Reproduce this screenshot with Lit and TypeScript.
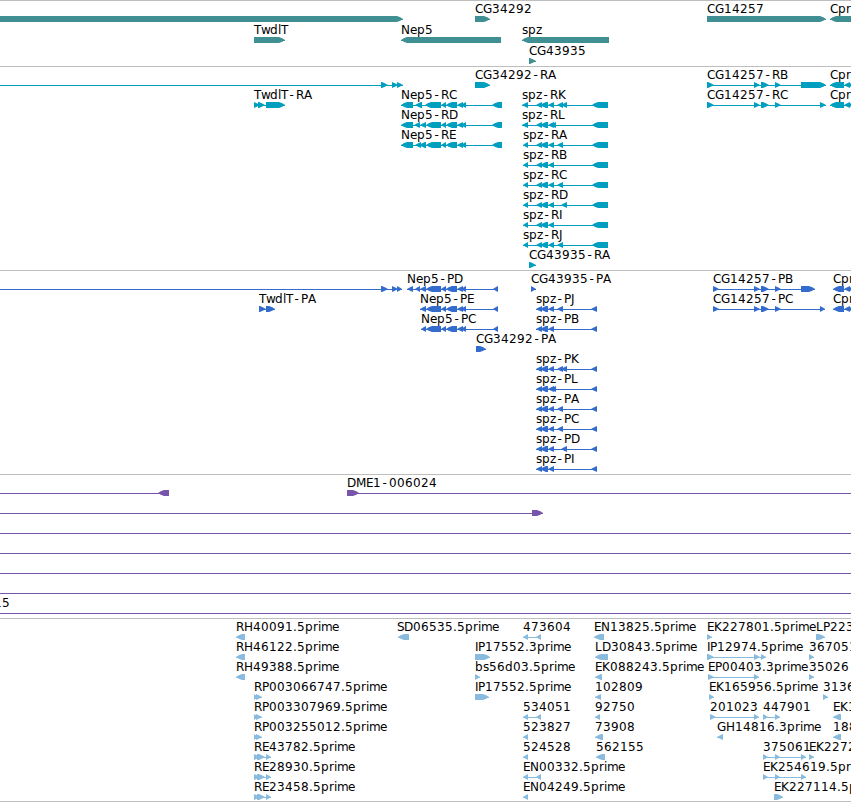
import { LitElement, html, svg, css } from 'lit';
import { customElement, property } from 'lit/decorators.js';

type Strand = '+' | '-';
type Span = [number, number];

interface Feature {
  row: number;
  label: string;
  x: number;
  strand: Strand;
  spans: Span[];
  line?: Span;
}

interface Track {
  name: string;
  height: number;
  pitch: number;
  features: Feature[];
}

const EDGE = 860;

const ADVANCES: Record<string, number> = {
  A: 8, B: 7, C: 8, D: 9, E: 7, G: 9, H: 9, I: 3, J: 4, K: 8, L: 7, M: 10, N: 9,
  P: 7, R: 8, S: 7, T: 7, b: 8, d: 8, e: 7, i: 3, l: 3, m: 11, p: 8, r: 5, s: 6,
  w: 9, z: 6, '.': 4,
};

function feature(row: number, label: string, x: number, strand: Strand, spans: Span[], line?: Span): Feature {
  return { row, label, x, strand, spans, line };
}

// exon blocks shared between isoforms
const nep5Tail: Span[] = [[426, 441], [441, 446], [446, 457], [457, 463], [461, 466]];
const spzCore: Span[] = [[536, 542], [540, 548], [548, 554]];
const cg14257Mid: Span[] = [[754, 760], [761, 769], [775, 781]];

const spzExtra: Record<string, Span[]> = {
  K: [[557, 563], [561, 567]],
  L: [[550, 556]],
  A: [[557, 563]],
  B: [],
  C: [[557, 563]],
  D: [[561, 567]],
  I: [],
  J: [[557, 563]],
};

const spzRna = ['K', 'L', 'A', 'B', 'C', 'D', 'I', 'J'].map((id, i) => {
  const start = i < 2 ? 522 : 523;
  return feature(i + 1, `spz-R${id}`, start, '-', [[start, 528], ...spzCore, ...spzExtra[id], [592, 608]]);
});

const spzCds = ([['J', 1], ['B', 2], ['K', 4], ['L', 5], ['A', 6], ['C', 7], ['D', 8], ['I', 9]] as [string, number][]).map(
  ([id, row]) => feature(row, `spz-P${id}`, 536, '-', [...spzCore, ...spzExtra[id], [591, 597]])
);

const twoExons: Span[] = [[523, 528], [536, 541]];
const rpExons: Span[] = [[254, 258], [256, 262]];
const reExons: Span[] = [[254, 260], [257, 265], [266, 271]];

const tracks: Track[] = [
  {
    name: 'gene',
    height: 65,
    pitch: 21,
    features: [
      feature(0, '', 0, '+', [[-10, 403]]),
      feature(0, 'CG34292', 475, '+', [[475, 490]]),
      feature(0, 'CG14257', 707, '+', [[707, 826]]),
      feature(0, 'Cpr', 830, '-', [[830, EDGE]]),
      feature(1, 'TwdlT', 254, '+', [[254, 285]]),
      feature(1, 'Nep5', 401, '-', [[401, 501]]),
      feature(1, 'spz', 522, '-', [[522, 609]]),
      feature(2, 'CG43935', 529, '+', [[529, 536]]),
    ],
  },
  {
    name: 'rna',
    height: 203,
    pitch: 20,
    features: [
      feature(0, '', 0, '+', [[381, 388], [392, 398], [397, 403]], [0, 403]),
      feature(0, 'CG34292-RA', 475, '+', [[475, 490]]),
      feature(0, 'CG14257-RB', 707, '+', [[707, 714], ...cg14257Mid, [801, 826]]),
      feature(0, 'Cpr', 830, '-', [[830, 844], [844, 850], [848, EDGE]]),
      feature(1, 'TwdlT-RA', 254, '+', [[254, 260], [258, 265], [266, 285]]),
      feature(1, 'Nep5-RC', 401, '-', [[401, 413], [415, 422], [425, 441], ...nep5Tail.slice(1), [492, 502]]),
      feature(1, 'CG14257-RC', 707, '+', [[707, 714], ...cg14257Mid, [820, 826]]),
      feature(1, 'Cpr', 830, '-', [[830, 844], [844, 850], [848, EDGE]]),
      feature(2, 'Nep5-RD', 401, '-', [[401, 413], [414, 420], [420, 426], ...nep5Tail, [492, 502]]),
      feature(3, 'Nep5-RE', 401, '-', [[401, 413], [415, 421], [419, 426], ...nep5Tail, [492, 502]]),
      ...spzRna,
      feature(9, 'CG43935-RA', 529, '+', [[529, 536]]),
    ],
  },
  {
    name: 'cds',
    height: 203,
    pitch: 20,
    features: [
      feature(0, '', 0, '+', [[381, 388], [392, 398], [397, 402]], [0, 402]),
      feature(0, 'Nep5-PD', 407, '-', [[407, 413], [415, 420], [420, 426], ...nep5Tail, [493, 498]]),
      feature(0, 'CG43935-PA', 531, '+', [[531, 536]]),
      feature(0, 'CG14257-PB', 713, '+', [[713, 719], ...cg14257Mid, [801, 815]]),
      feature(0, 'Cpr', 833, '-', [[833, 844], [844, 850], [848, EDGE]]),
      feature(1, 'TwdlT-PA', 259, '+', [[259, 266], [266, 275]]),
      feature(1, 'Nep5-PE', 420, '-', [[420, 426], ...nep5Tail, [493, 498]]),
      feature(1, 'CG14257-PC', 713, '+', [[713, 719], ...cg14257Mid, [820, 825]]),
      feature(1, 'Cpr', 833, '-', [[833, 844], [844, 850], [848, EDGE]]),
      feature(2, 'Nep5-PC', 421, '-', [[421, 426], ...nep5Tail, [493, 498]]),
      feature(3, 'CG34292-PA', 476, '+', [[476, 486]]),
      ...spzCds,
    ],
  },
  {
    name: 'clone',
    height: 143,
    pitch: 20,
    features: [
      feature(0, '', 0, '-', [[158, 169]], [0, 169]),
      feature(0, 'DME1-006024', 347, '+', [[347, 359]], [347, EDGE]),
      feature(1, '', 0, '+', [[532, 543]], [0, 543]),
      ...[2, 3, 4, 5].map((row) => feature(row, '', 0, '+', [], [0, EDGE])),
      feature(6, '15', -6, '+', [], [0, EDGE]),
    ],
  },
  {
    name: 'est',
    height: 182,
    pitch: 20,
    features: [
      feature(0, 'RH40091.5prime', 236, '-', [[236, 245]]),
      feature(1, 'RH46122.5prime', 236, '-', [[236, 245]]),
      feature(2, 'RH49388.5prime', 236, '-', [[236, 245]]),
      feature(3, 'RP003066747.5prime', 254, '+', rpExons),
      feature(4, 'RP003307969.5prime', 254, '+', rpExons),
      feature(5, 'RP003255012.5prime', 254, '+', rpExons),
      feature(6, 'RE43782.5prime', 254, '+', reExons),
      feature(7, 'RE28930.5prime', 254, '+', reExons),
      feature(8, 'RE23458.5prime', 254, '+', reExons),
      feature(0, 'SD06535.5prime', 397, '-', [[398, 409]]),
      feature(1, 'IP17552.3prime', 475, '+', [[475, 490]]),
      feature(2, 'bs56d03.5prime', 475, '+', [[475, 480]]),
      feature(3, 'IP17552.5prime', 475, '+', [[475, 489]]),
      feature(0, '473604', 523, '-', twoExons),
      feature(4, '534051', 523, '-', twoExons),
      feature(5, '523827', 523, '-', [[523, 528]]),
      feature(6, '524528', 523, '-', [[523, 528]]),
      feature(7, 'EN00332.5prime', 523, '-', twoExons),
      feature(8, 'EN04249.5prime', 523, '-', [[523, 528]]),
      feature(0, 'EN13825.5prime', 594, '-', [[594, 604]]),
      feature(1, 'LD30843.5prime', 595, '-', [[595, 608]]),
      feature(2, 'EK088243.5prime', 595, '-', [[595, 602]]),
      feature(3, '102809', 595, '-', [[595, 601]]),
      feature(4, '92750', 595, '-', [[595, 600]]),
      feature(5, '73908', 595, '-', [[595, 603]]),
      feature(6, '562155', 596, '-', [[596, 605]]),
      feature(0, 'EK227801.5prime', 707, '+', [[707, 712]]),
      feature(1, 'IP12974.5prime', 707, '+', [[707, 714], [754, 760], [761, 766]]),
      feature(2, 'EP00403.3prime', 708, '+', [[708, 714], [754, 759]]),
      feature(3, 'EK165956.5prime', 709, '+', [[709, 714]]),
      feature(4, '201023', 710, '+', [[710, 716], [754, 759]]),
      feature(5, 'GH14816.3prime', 717, '-', [[717, 723]]),
      feature(4, '447901', 763, '+', [[763, 768], [775, 780]]),
      feature(6, '375061', 763, '+', [[763, 768], [775, 780], [801, 806]]),
      feature(7, 'EK254619.5prime', 763, '+', [[763, 768], [775, 780], [801, 806]]),
      feature(8, 'EK227114.5prime', 774, '+', [[774, 783]]),
      feature(0, 'LP223', 816, '+', [[816, 825]]),
      feature(1, '367051', 809, '+', [[809, 814]]),
      feature(2, '35026', 809, '+', [[809, 814]]),
      feature(3, '3136', 823, '+', [[823, 828]]),
      feature(4, 'EK1', 833, '-', [[833, 841]]),
      feature(5, '188', 833, '-', [[833, 841]]),
      feature(6, 'EK2272', 809, '+', [[809, 814]]),
    ],
  },
];

@customElement('genome-track')
export class GenomeTrack extends LitElement {
  static styles = css`
    :host {
      display: block;
      border-top: 1px solid #bebebe;
    }

    svg {
      display: block;
      width: 100%;
      overflow: hidden;
    }

    text {
      font-family: 'DejaVu Sans', 'Noto Sans', sans-serif;
      font-size: 12px;
      fill: #000;
    }

    .gene {
      fill: #408f93;
    }

    .rna {
      fill: #009fbf;
    }

    .cds {
      fill: #336ccc;
    }

    .clone {
      fill: #7755aa;
    }

    .est {
      fill: #88bbdd;
    }
  `;

  @property({ attribute: false })
  track!: Track;

  private charPositions(label: string, x: number) {
    const positions: number[] = [];
    for (const char of label) {
      // the hyphen is narrower than its slot, so centre it
      positions.push(char === '-' ? x + 1.5 : x);
      x += ADVANCES[char] ?? 8;
    }
    return positions.join(' ');
  }

  private arrow([x1, x2]: Span, top: number, strand: Strand) {
    const width = x2 - x1;
    const head = Math.min(6, width);
    const [tail, tip, dir] = strand === '+' ? [x1, x2, 1] : [x2, x1, -1];
    const neck = tip - head * dir;
    const cheek = tip - head * 0.45 * dir;
    // long blocks get a slightly rounded head, short ones a plain triangle
    const bevel = width > 8 ? 1.2 : 1.6;
    const points = [
      [tail, top],
      [neck, top],
      [cheek, top + bevel],
      [tip, top + 3],
      [cheek, top + 6 - bevel],
      [neck, top + 6],
      [tail, top + 6],
    ];
    return svg`<polygon points=${points.map((p) => p.join(',')).join(' ')}></polygon>`;
  }

  private renderFeature(f: Feature) {
    const top = f.row * this.track.pitch + 15;
    const [from, to] = f.line ?? [f.spans[0][0], f.spans[f.spans.length - 1][1]];
    return svg`
      <rect x=${from} y=${top + 3} width=${to - from} height="1"></rect>
      ${f.spans.map((span) => this.arrow(span, top, f.strand))}
      ${f.label ? svg`<text x=${this.charPositions(f.label, f.x)} y=${top - 3}>${f.label}</text>` : ''}
    `;
  }

  render() {
    return html`
      <svg class=${this.track.name} height=${this.track.height}>
        ${this.track.features.map((f) => this.renderFeature(f))}
      </svg>
    `;
  }
}

@customElement('app-root')
export class AppRoot extends LitElement {
  static styles = css`
    :host {
      display: block;
      height: 802px;
      box-sizing: border-box;
      overflow: hidden;
      background: #fff;
    }

    .tracks {
      display: flex;
      flex-direction: column;
      border-bottom: 1px solid #bebebe;
    }
  `;

  render() {
    return html`
      <div class="tracks">
        ${tracks.map((track) => html`<genome-track .track=${track}></genome-track>`)}
      </div>
    `;
  }
}

declare global {
  interface HTMLElementTagNameMap {
    'genome-track': GenomeTrack;
    'app-root': AppRoot;
  }
}
